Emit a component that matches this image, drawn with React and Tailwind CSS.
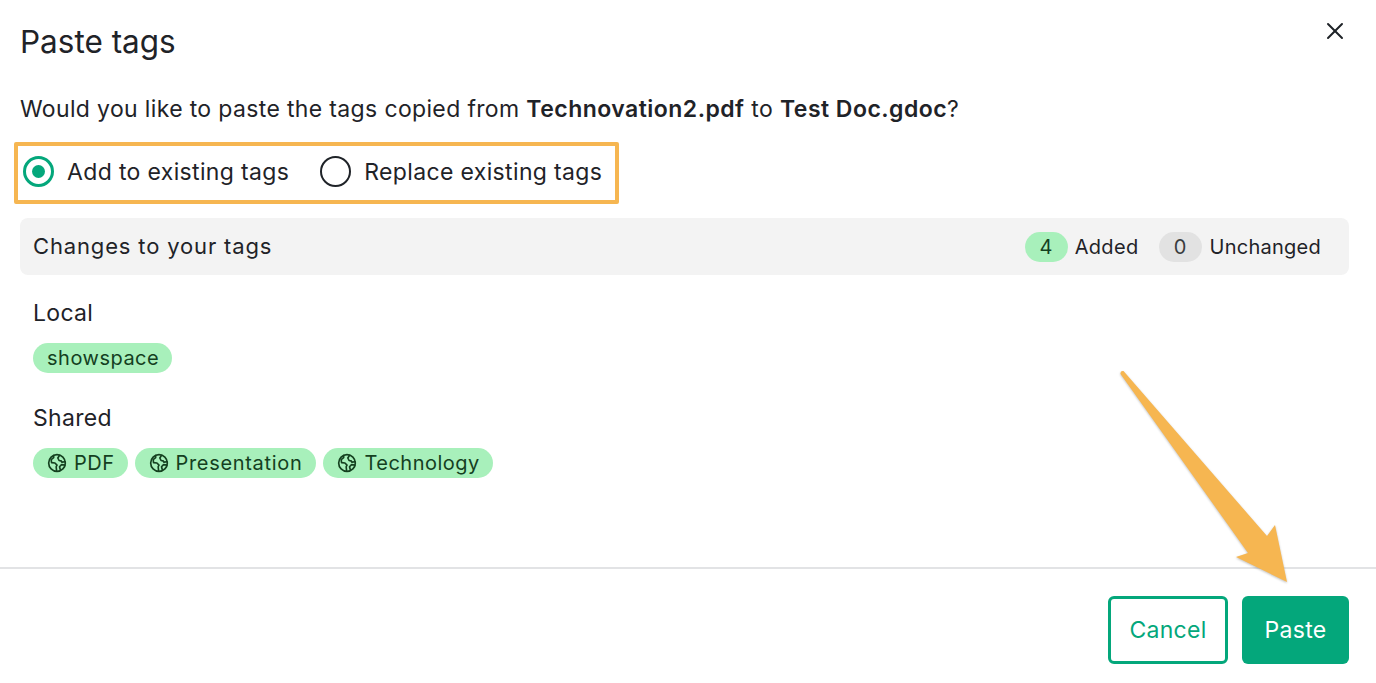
import React from "react";
import { X } from "lucide-react";

function Globe() {
  return (
    <svg width="20" height="20" viewBox="0 0 24 24" fill="none" stroke="#14401f" strokeWidth="2" strokeLinecap="round" strokeLinejoin="round">
      <circle cx="12" cy="12" r="10" />
      <path d="M8 3v2.5L5 8l.5 3.5 4 .5 2.5 2.5-1 2 .5 4.5" />
      <path d="M15 2.8 13 6l1.5 3 2.5.5L18 11l3.8-.5" />
      <path d="M21.5 14.5 17.5 14 15 16.5l1 3.5" />
    </svg>
  );
}

function Tag({ children, globe, wide }) {
  return (
    <span className={wide
      ? "flex h-[30px] items-center gap-[7px] rounded-full bg-[#a8f0bb] pl-[14px] pr-[14px] text-[20px] tracking-[0.68px] text-[#14401f]"
      : "flex h-[30px] items-center gap-[7px] rounded-full bg-[#a8f0bb] pl-[14px] pr-[13px] text-[20px] tracking-[0.5px] text-[#14401f]"}>
      {globe && <Globe />}
      {children}
    </span>
  );
}

function Radio({ checked, label }) {
  return (
    <label className="flex items-center gap-[13px]">
      {checked ? (
        <span className="flex h-[31px] w-[31px] items-center justify-center rounded-full border-[3px] border-[#04a77b]">
          <span className="h-[13px] w-[13px] rounded-full bg-[#04a77b]" />
        </span>
      ) : (
        <span className="h-[31px] w-[31px] rounded-full border-2 border-[#1f2328]" />
      )}
      <span className="pt-[1px]">{label}</span>
    </label>
  );
}

export default function App() {
  return (
    <div className="relative flex h-[683px] w-[1376px] flex-col overflow-hidden bg-white font-['Inter',sans-serif] text-[#1f2328]">
      <div className="flex items-start justify-between pl-5 pr-[27px] pt-[20px]">
        <h1 className="text-[31.5px] leading-[44px] font-normal">Paste tags</h1>
        <X size={28} strokeWidth={1.7} className="mt-[-3px]" />
      </div>
      <p className="mt-[30px] pl-5 text-[23px] leading-[30px] tracking-[0.35px]">
        Would you like to paste the tags copied from <b className="font-semibold tracking-[0.47px]">Technovation2.pdf</b> to{" "}
        <b className="font-semibold tracking-[0.47px]">Test Doc.gdoc</b>?
      </p>
      <div className="mt-[32px] flex h-[31px] items-center gap-[31px] pl-[23px] text-[23px] tracking-[0.35px]">
        <Radio checked label="Add to existing tags" />
        <Radio label="Replace existing tags" />
      </div>
      <div className="ml-5 mr-[27px] mt-[31px] flex h-[57px] items-center justify-between rounded-lg bg-[#f3f3f3] pl-[13px] pr-[28px]">
        <span className="text-[22px] tracking-[0.85px]">Changes to your tags</span>
        <div className="flex items-center text-[20px] tracking-[0.25px]">
          <span className="flex h-[30px] w-[43px] items-center justify-center rounded-full bg-[#a8f0bb] text-[#14401f]">4</span>
          <span className="ml-[7px] tracking-[0.35px]">Added</span>
          <span className="ml-[20px] flex h-[30px] w-[43px] items-center justify-center rounded-full bg-[#e2e2e2] text-[#3a3d40]">0</span>
          <span className="ml-[8px]">Unchanged</span>
        </div>
      </div>
      <div className="mt-[22px] pl-[33px] text-[23px] leading-[32px] tracking-[0.3px]">Local</div>
      <div className="mt-[14px] flex gap-[7px] pl-[33px]">
        <Tag>showspace</Tag>
      </div>
      <div className="mt-[29px] pl-[33px] text-[23px] leading-[32px] tracking-[0.3px]">Shared</div>
      <div className="mt-[14px] flex gap-[7px] pl-[33px]">
        <Tag globe>PDF</Tag>
        <Tag globe wide>Presentation</Tag>
        <Tag globe>Technology</Tag>
      </div>
      <div className="mt-auto flex h-[116px] items-start justify-end gap-[14px] border-t-2 border-[#e2e3e5] pr-[27px] pt-[27px]">
        <button className="h-[68px] w-[120px] rounded-md border-[3px] border-[#04a77b] bg-white text-[23px] tracking-[0.3px] text-[#04a77b]">Cancel</button>
        <button className="h-[68px] w-[107px] rounded-md bg-[#04a77b] text-[23px] tracking-[0.3px] text-white">Paste</button>
      </div>

      <div className="pointer-events-none absolute left-[14px] top-[142px] h-[62px] w-[605px] rounded-[2px] border-[4px] border-[#f6b651]" />
      <svg className="pointer-events-none absolute left-[1100px] top-[360px]" width="200" height="230" viewBox="1100 360 200 230">
        <path
          d="M1120.5 374 Q1120 370.5 1123.5 371 L1267 536 L1275 525 L1287 582 L1236 557 L1248 553 Z"
          fill="#f6b651"
          style={{ filter: "drop-shadow(0 1px 1px rgba(0,0,0,0.25))" }}
        />
      </svg>
    </div>
  );
}
